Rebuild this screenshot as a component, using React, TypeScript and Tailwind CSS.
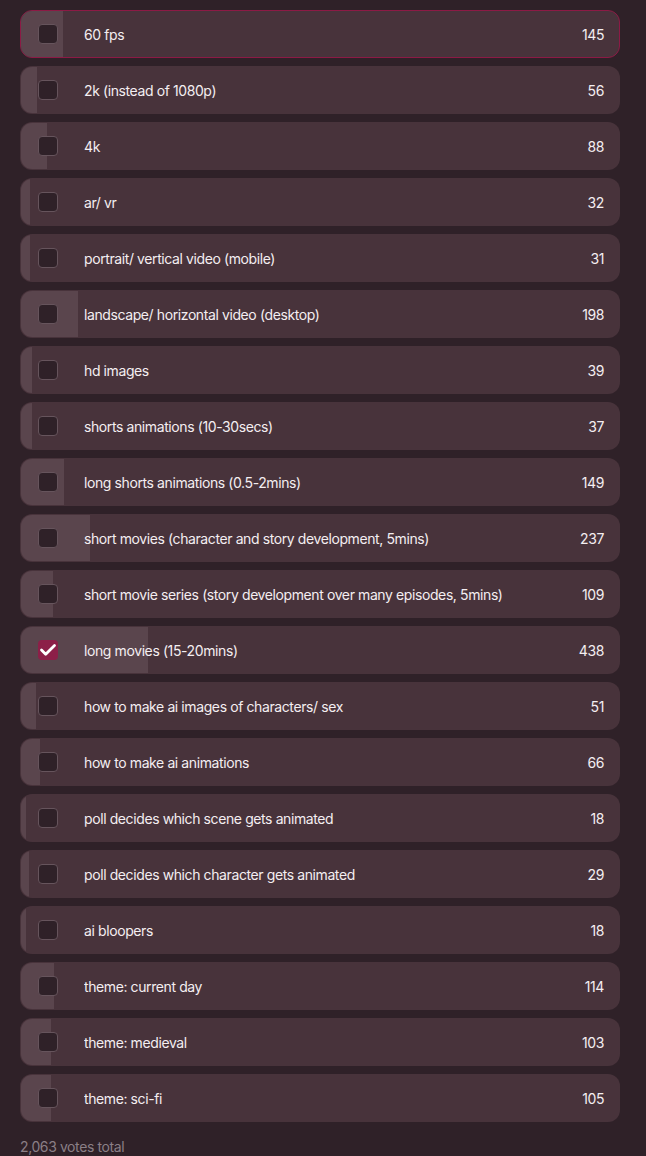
import React, { useState } from 'react';

type Option = { label: string; votes: number };

const options: Option[] = [
  { label: '60 fps', votes: 145 },
  { label: '2k (instead of 1080p)', votes: 56 },
  { label: '4k', votes: 88 },
  { label: 'ar/ vr', votes: 32 },
  { label: 'portrait/ vertical video (mobile)', votes: 31 },
  { label: 'landscape/ horizontal video (desktop)', votes: 198 },
  { label: 'hd images', votes: 39 },
  { label: 'shorts animations (10-30secs)', votes: 37 },
  { label: 'long shorts animations (0.5-2mins)', votes: 149 },
  { label: 'short movies (character and story development, 5mins)', votes: 237 },
  { label: 'short movie series (story development over many episodes, 5mins)', votes: 109 },
  { label: 'long movies (15-20mins)', votes: 438 },
  { label: 'how to make ai images of characters/ sex', votes: 51 },
  { label: 'how to make ai animations', votes: 66 },
  { label: 'poll decides which scene gets animated', votes: 18 },
  { label: 'poll decides which character gets animated', votes: 29 },
  { label: 'ai bloopers', votes: 18 },
  { label: 'theme: current day', votes: 114 },
  { label: 'theme: medieval', votes: 103 },
  { label: 'theme: sci-fi', votes: 105 },
];

const TOTAL = 2063;

export default function App() {
  const [checked, setChecked] = useState<number[]>([11]);
  const focused = 0;

  const toggle = (i: number) =>
    setChecked((c) => (c.includes(i) ? c.filter((x) => x !== i) : [...c, i]));

  return (
    <div
      className="min-h-[1156px] w-full bg-[#2f2128] pl-5 pt-[10px] tracking-[-0.4px]"
      style={{ fontFamily: 'Inter, "Noto Sans", sans-serif' }}
    >
      <div className="flex w-[600px] flex-col gap-2">
        {options.map((o, i) => {
          const on = checked.includes(i);
          return (
            <button
              key={o.label}
              onClick={() => toggle(i)}
              className={`relative flex h-[48px] w-full items-center overflow-hidden rounded-xl bg-[#48333b] text-left ${
                i === focused ? 'border border-[#8c1a45]' : 'border border-transparent'
              }`}
            >
              <div
                className="absolute inset-y-0 left-0 bg-[#5a454d]"
                style={{ width: `${(o.votes / TOTAL) * 100}%` }}
              />
              <div className="relative ml-[17px] flex h-5 w-5 shrink-0 items-center justify-center">
                {on ? (
                  <div className="flex h-5 w-5 items-center justify-center rounded-[4px] bg-[#8c1f48]">
                    <svg viewBox="0 0 20 20" className="h-5 w-5" fill="none">
                      <path
                        d="M3.5 10l4.2 4.2L16.5 5.5"
                        stroke="#ffffff"
                        strokeWidth="2.8"
                        strokeLinecap="round"
                        strokeLinejoin="round"
                      />
                    </svg>
                  </div>
                ) : (
                  <div className="h-5 w-5 rounded-[4px] border border-[#66545c] bg-[#2f2128]" />
                )}
              </div>
              <span className="relative ml-[26px] flex-1 truncate text-[14px] text-[#f4eef1]">
                {o.label}
              </span>
              <span className="relative mr-[15px] text-[14px] text-[#f4eef1]">{o.votes}</span>
            </button>
          );
        })}
      </div>
      <div className="mt-[14px] text-[14px] text-[#8b7f86]">2,063 votes total</div>
    </div>
  );
}
